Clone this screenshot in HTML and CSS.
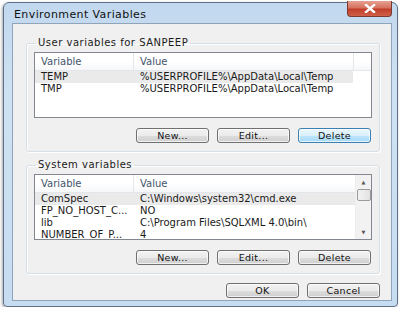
FILE: index.html
```html
<!DOCTYPE html>
<html lang="en">
<head>
    <meta charset="UTF-8">
    <title>Environment Variables</title>
    <link rel="stylesheet" href="styles.css">
</head>
<body>
    <div class="window">
        <div class="titlebar">
            <span class="title">Environment Variables</span>
            <button type="button" class="close">
                <svg width="12" height="9" viewBox="0 0 12 9"><path d="M2 1 L10 8 M10 1 L2 8" stroke="#fff" stroke-width="2.4" stroke-linecap="square"/></svg>
            </button>
        </div>
        <div class="client">
            <fieldset class="group">
                <legend>User variables for SANPEEP</legend>
                <div class="list">
                    <div class="row head">
                        <span class="col-var">Variable</span>
                        <span class="col-val">Value</span>
                        <span class="col-pad"></span>
                    </div>
                    <div class="row selected">
                        <span class="col-var">TEMP</span>
                        <span class="col-val">%USERPROFILE%\AppData\Local\Temp</span>
                    </div>
                    <div class="row">
                        <span class="col-var">TMP</span>
                        <span class="col-val">%USERPROFILE%\AppData\Local\Temp</span>
                    </div>
                </div>
                <div class="buttons">
                    <button type="button" class="button">New...</button>
                    <button type="button" class="button">Edit...</button>
                    <button type="button" class="button default">Delete</button>
                </div>
            </fieldset>

            <fieldset class="group">
                <legend>System variables</legend>
                <div class="list scrolled">
                    <div class="rows">
                        <div class="row head">
                            <span class="col-var">Variable</span>
                            <span class="col-val">Value</span>
                        </div>
                        <div class="row selected">
                            <span class="col-var">ComSpec</span>
                            <span class="col-val">C:\Windows\system32\cmd.exe</span>
                        </div>
                        <div class="row">
                            <span class="col-var">FP_NO_HOST_C...</span>
                            <span class="col-val">NO</span>
                        </div>
                        <div class="row">
                            <span class="col-var">lib</span>
                            <span class="col-val">C:\Program Files\SQLXML 4.0\bin\</span>
                        </div>
                        <div class="row">
                            <span class="col-var">NUMBER_OF_P...</span>
                            <span class="col-val">4</span>
                        </div>
                    </div>
                    <div class="scrollbar">
                        <span class="arrow">&#9650;</span>
                        <span class="thumb"></span>
                        <span class="track"></span>
                        <span class="arrow">&#9660;</span>
                    </div>
                </div>
                <div class="buttons">
                    <button type="button" class="button">New...</button>
                    <button type="button" class="button">Edit...</button>
                    <button type="button" class="button">Delete</button>
                </div>
            </fieldset>

            <div class="buttons footer">
                <button type="button" class="button">OK</button>
                <button type="button" class="button">Cancel</button>
            </div>
        </div>
    </div>
</body>
</html>
```

FILE: styles.css
```css
body {
    margin: 0;
    background: #fff;
    font-family: "DejaVu Sans", sans-serif;
    font-size: 10px;
    color: #1a1a1a;
}
.window {
    margin: 2px 0 0 3px;
    width: 380px;
    height: 298px;
    padding: 0 5px 5px 8px;
    background: linear-gradient(#c2d8ee, #cfe2f4 30%, #c6dcf1);
    border: 1px solid #5d7085;
    border-radius: 6px 6px 4px 4px;
    box-shadow: -1px 1px 3px rgba(0, 0, 0, 0.35);
    display: flex;
    flex-direction: column;
}
.titlebar {
    height: 20px;
    display: flex;
    justify-content: space-between;
    align-items: flex-start;
}
.title {
    margin: 5px 0 0 2px;
    font-size: 11px;
    letter-spacing: 0.4px;
    color: #111;
}
.close {
    width: 45px;
    height: 16px;
    margin: -2px 0 0 0;
    padding: 0;
    border: 1px solid #7a3a33;
    border-top: none;
    border-radius: 0 0 4px 4px;
    background: linear-gradient(#e6a190, #d5725f 45%, #c13e2a 55%, #d0604a);
    display: flex;
    align-items: center;
    justify-content: center;
}
.client {
    flex: 1;
    background: #f0f0f0;
    border: 1px solid #8fa4b8;
    display: flex;
    flex-direction: column;
    padding: 13px 11px 0 13px;
}
.group {
    margin: 0 0 7px 0;
    padding: 3px 7px 8px 7px;
    border: 1px solid #d5dfe5;
    border-radius: 3px;
    box-shadow: inset 1px 1px 0 #fff, 1px 1px 0 #fff;
    min-width: 0;
}
.group legend {
    padding: 0 2px;
    margin-left: 2px;
    font-size: 10px;
    letter-spacing: 0.5px;
    line-height: 12px;
    color: #1a1a1a;
}
.list {
    height: 64px;
    background: #fff;
    border: 1px solid #828790;
    overflow: hidden;
}
.list.scrolled {
    display: flex;
}
.list.scrolled .rows {
    flex: 1;
}
.row {
    height: 12px;
    line-height: 12px;
    display: flex;
    white-space: nowrap;
}
.row.head {
    height: 17px;
    line-height: 17px;
    color: #44546a;
    background: linear-gradient(#fff, #fff 50%, #f6f7f9);
    border-bottom: 1px solid #e3e6ea;
}
.row.selected {
    background: #eaeaea;
    margin-right: 18px;
}
.list.scrolled .row.selected {
    margin-right: 0;
}
.col-var {
    width: 99px;
    padding-left: 6px;
    box-sizing: border-box;
}
.head .col-var {
    border-right: 1px solid #e3e6ea;
}
.col-val {
    flex: 1;
    padding-left: 6px;
}
.head .col-pad {
    width: 17px;
    flex: none;
    border-left: 1px solid #e3e6ea;
}
.scrollbar {
    width: 15px;
    border-left: 1px solid #eee;
    background: #f2f2f2;
    display: flex;
    flex-direction: column;
    align-items: center;
}
.arrow {
    font-size: 5px;
    color: #555;
    height: 14px;
    line-height: 14px;
}
.thumb {
    width: 12px;
    height: 10px;
    border: 1px solid #9a9a9a;
    border-radius: 2px;
    background: linear-gradient(90deg, #f3f3f3, #e2e2e2);
}
.track {
    flex: 1;
}
.buttons {
    display: flex;
    justify-content: flex-end;
    gap: 8px;
    margin-top: 10px;
    padding-right: 1px;
}
.button {
    width: 73px;
    height: 15px;
    padding: 0;
    font-family: "DejaVu Sans", sans-serif;
    font-size: 9.5px;
    letter-spacing: 0.3px;
    color: #111;
    border: 1px solid #707070;
    border-radius: 3px;
    background: linear-gradient(#f2f2f2, #ebebeb 50%, #dddddd 51%, #cfcfcf);
    box-shadow: inset 0 0 0 1px rgba(255, 255, 255, 0.7);
}
.button.default {
    border-color: #3c7fb1;
    background: linear-gradient(#eaf6fd, #d9f0fc 50%, #bee6fd 51%, #a7d9f5);
}
.footer {
    margin-top: 2px;
    padding-right: 0;
}
```
